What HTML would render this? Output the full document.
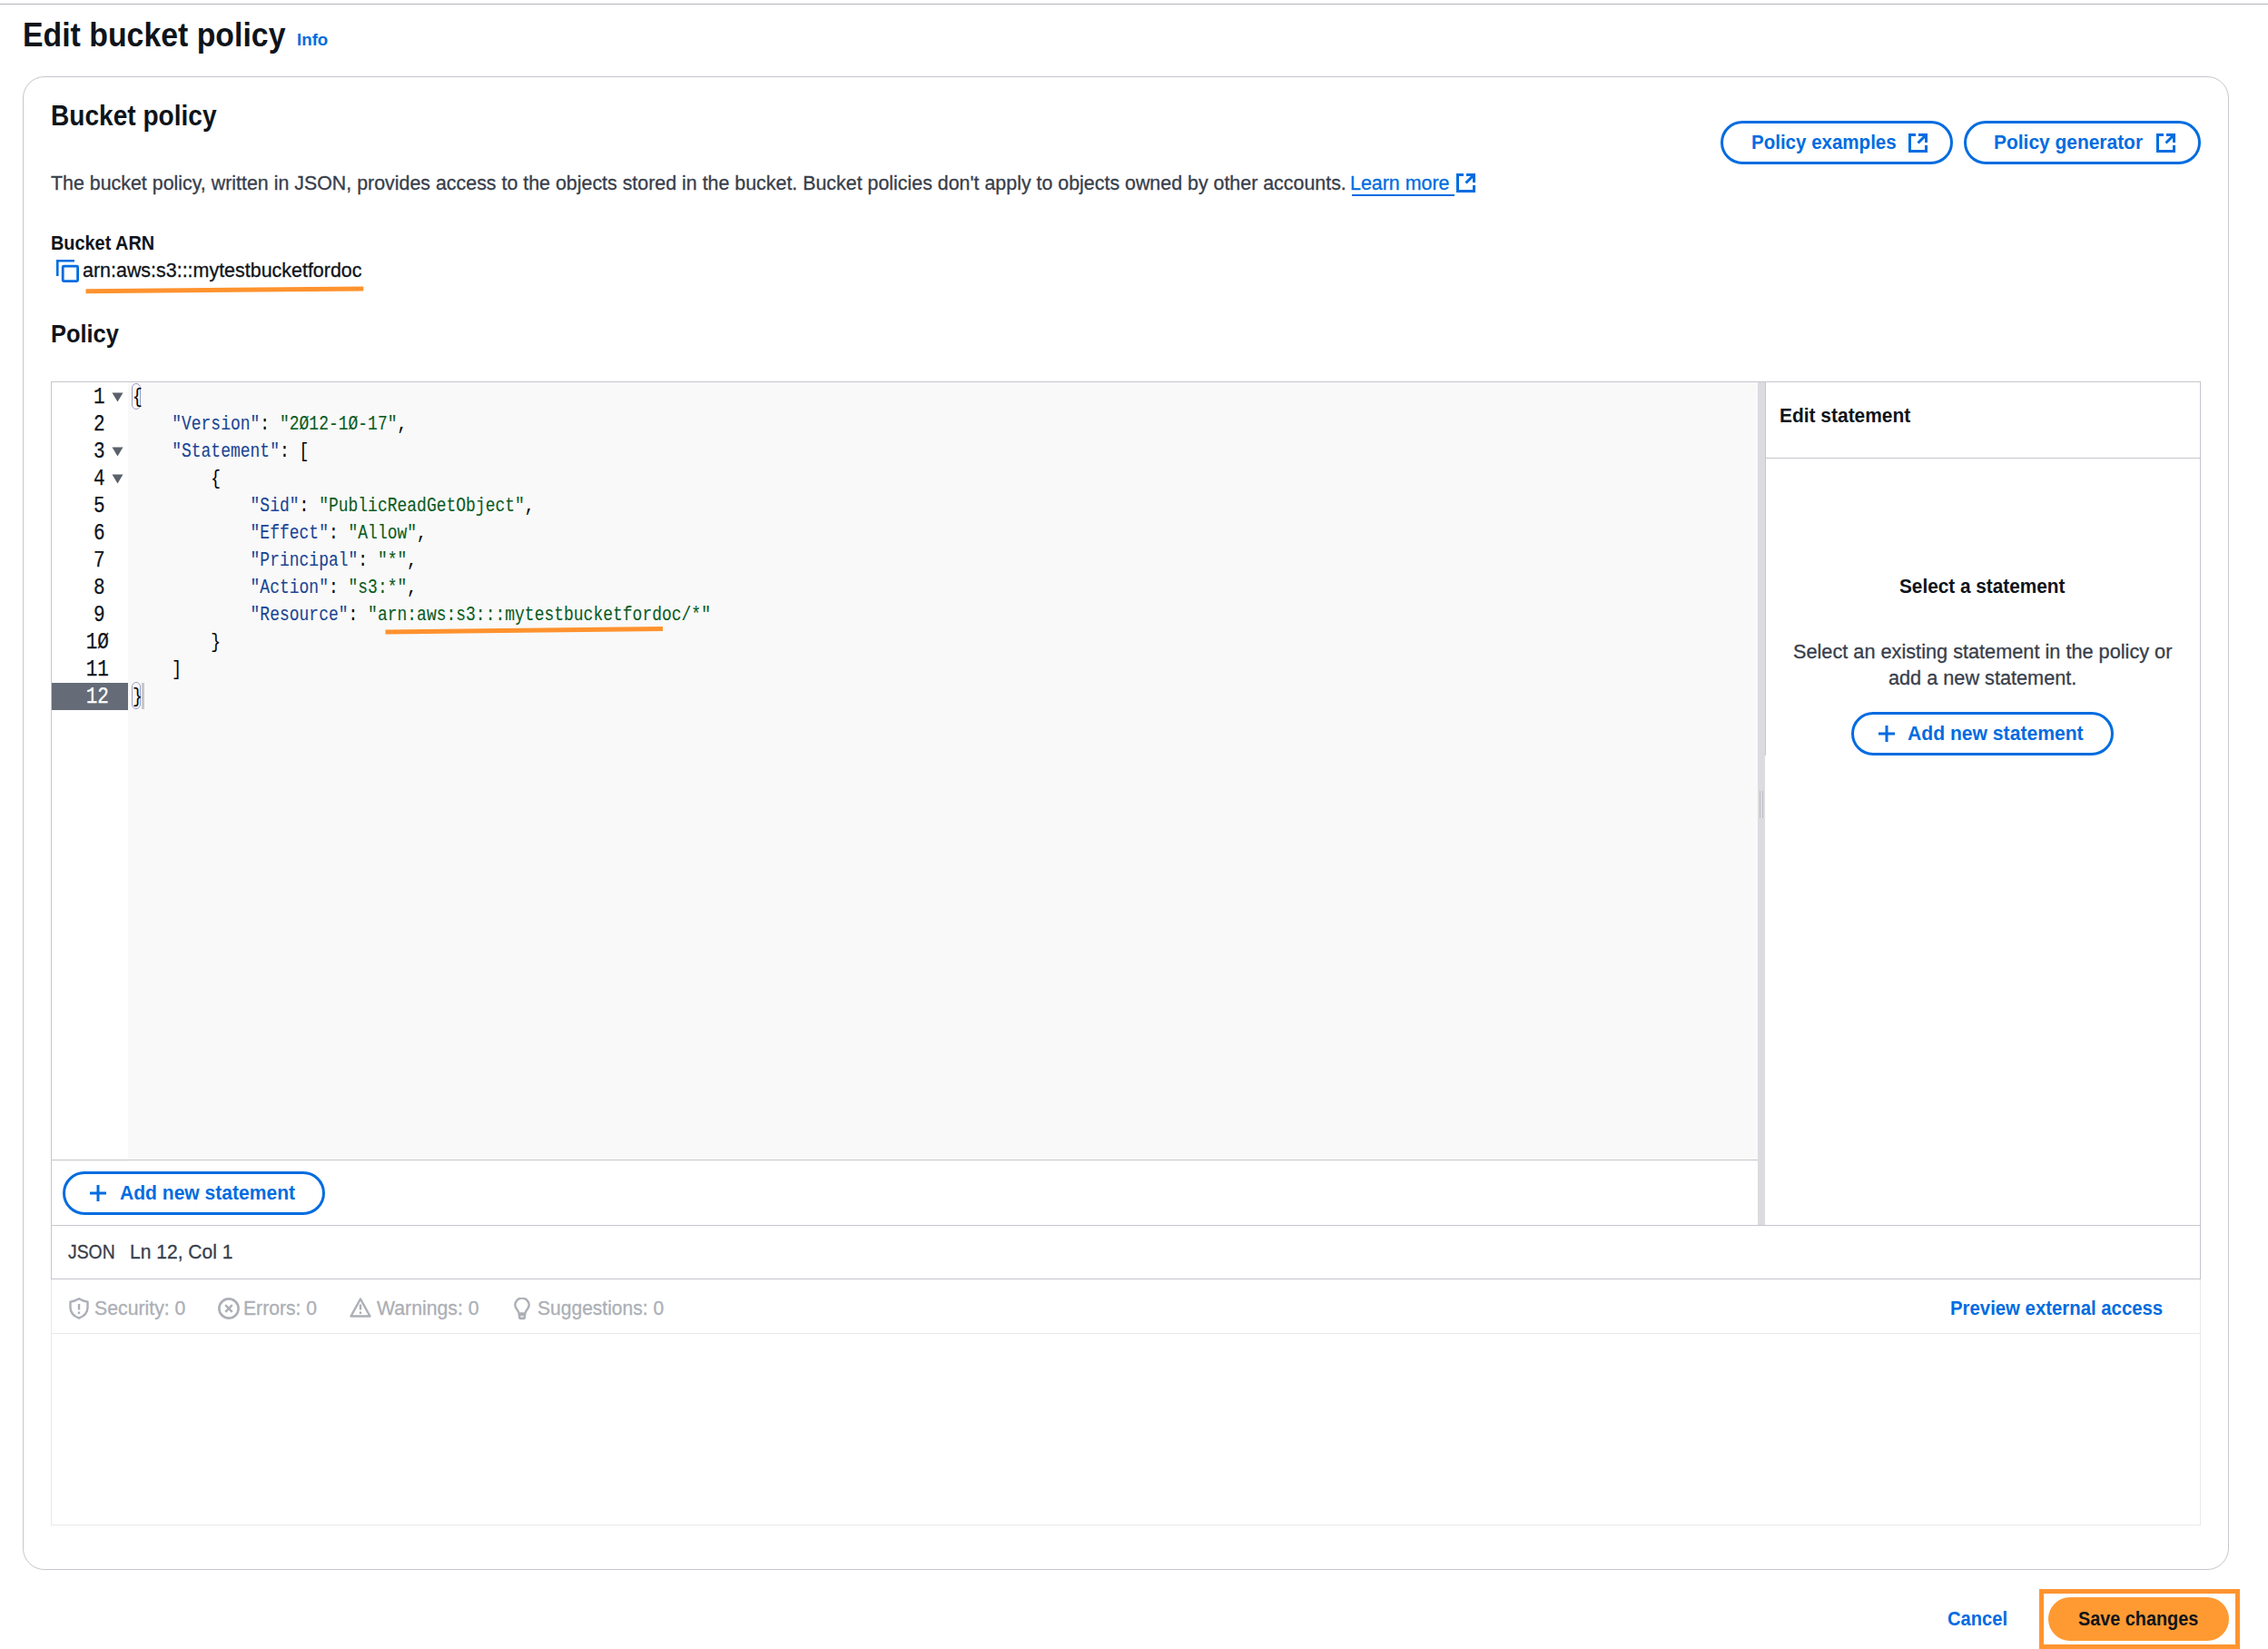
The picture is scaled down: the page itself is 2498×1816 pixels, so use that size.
<!DOCTYPE html>
<html><head><meta charset="utf-8"><title>Edit bucket policy</title>
<style>
html,body{margin:0;padding:0;background:#ffffff;}
body{width:2498px;height:1816px;position:relative;overflow:hidden;font-family:"Liberation Sans",sans-serif;}
.ab{position:absolute;}
.t{position:absolute;white-space:nowrap;line-height:1;transform-origin:0 0;}
.c{position:absolute;left:146px;white-space:pre;font-family:"Liberation Mono",monospace;font-size:21.70px;line-height:1;transform-origin:0 0;transform:scaleX(0.8295);-webkit-text-stroke:0.12px currentColor;}
.g{position:absolute;right:2378px;white-space:pre;font-family:"Liberation Mono",monospace;font-size:25.80px;line-height:1;transform-origin:100% 0;transform:scaleX(0.8141);text-align:right;-webkit-text-stroke:0.25px currentColor;}
</style></head>
<body>
<div class="ab" style="left:0px;top:4px;width:2498px;height:1px;background:#b4b4bb"></div>
<div class="ab" style="left:25px;top:84px;width:2430px;height:1645px;box-sizing:border-box;border:1px solid #c6c6cd;border-radius:24px"></div>
<div class="ab" style="left:1895px;top:133px;width:256px;height:48px;box-sizing:border-box;border:3px solid #006ce0;border-radius:24.0px;background:transparent"></div>
<svg class="ab" style="left:2101.5px;top:146.5px" width="21" height="21" viewBox="0 0 21 21"><path d="M8 1.5 H1.5 V19.5 H19.5 V13" fill="none" stroke="#006ce0" stroke-width="3" stroke-linejoin="miter"/><path d="M11 1.5 H19.5 V10" fill="none" stroke="#006ce0" stroke-width="3"/><path d="M19 2 L10.5 10.5" fill="none" stroke="#006ce0" stroke-width="3"/></svg>
<div class="ab" style="left:2163px;top:133px;width:261px;height:48px;box-sizing:border-box;border:3px solid #006ce0;border-radius:24.0px;background:transparent"></div>
<svg class="ab" style="left:2374.5px;top:146.5px" width="21" height="21" viewBox="0 0 21 21"><path d="M8 1.5 H1.5 V19.5 H19.5 V13" fill="none" stroke="#006ce0" stroke-width="3" stroke-linejoin="miter"/><path d="M11 1.5 H19.5 V10" fill="none" stroke="#006ce0" stroke-width="3"/><path d="M19 2 L10.5 10.5" fill="none" stroke="#006ce0" stroke-width="3"/></svg>
<div class="ab" style="left:1489px;top:214px;width:113px;height:2px;background:#006ce0"></div>
<svg class="ab" style="left:1604px;top:191px" width="21" height="21" viewBox="0 0 21 21"><path d="M8 1.5 H1.5 V19.5 H19.5 V13" fill="none" stroke="#006ce0" stroke-width="3" stroke-linejoin="miter"/><path d="M11 1.5 H19.5 V10" fill="none" stroke="#006ce0" stroke-width="3"/><path d="M19 2 L10.5 10.5" fill="none" stroke="#006ce0" stroke-width="3"/></svg>
<svg class="ab" style="left:61px;top:285px" width="26" height="26" viewBox="0 0 26 26"><path d="M2.3 19 V2.3 H21" fill="none" stroke="#006ce0" stroke-width="2.6"/><rect x="8.2" y="8.2" width="16.4" height="16.4" rx="1" fill="none" stroke="#006ce0" stroke-width="2.8"/></svg>
<div class="ab" style="left:56px;top:420px;width:2368px;height:989px;box-sizing:border-box;border:1px solid #c6c6cd;border-bottom:none"></div>
<div class="ab" style="left:141px;top:421px;width:1795px;height:856px;background:#f9f9f9"></div>
<div class="ab" style="left:57px;top:1277px;width:1879px;height:1px;background:#c6c6cd"></div>
<div class="ab" style="left:1936px;top:421px;width:8px;height:928px;background:#dcdbe0"></div>
<div class="ab" style="left:1944px;top:421px;width:1px;height:411px;background:#c6c6cd"></div>
<div class="ab" style="left:1938px;top:871px;width:1px;height:30px;background:#bdbdc4"></div>
<div class="ab" style="left:1941px;top:871px;width:1px;height:30px;background:#bdbdc4"></div>
<div class="ab" style="left:1944px;top:504px;width:479px;height:1px;background:#c6c6cd"></div>
<div class="ab" style="left:57px;top:1349px;width:2366px;height:1px;background:#c6c6cd"></div>
<div class="ab" style="left:56px;top:1408px;width:2368px;height:1px;background:#c6c6cd"></div>
<div class="ab" style="left:56px;top:1409px;width:2368px;height:271px;box-sizing:border-box;border:1px solid #e9e9ed;border-top:none"></div>
<div class="ab" style="left:57px;top:1468px;width:2366px;height:1px;background:#e9e9ed"></div>
<div class="ab" style="left:57px;top:752px;width:84px;height:30px;background:#656c77"></div>
<div class="ab" style="left:145px;top:422px;width:10px;height:29px;box-sizing:border-box;border:1px solid #9a9cc4;border-radius:5px"></div>
<div class="ab" style="left:145px;top:751px;width:10px;height:30px;box-sizing:border-box;border:1px solid #9a9cc4;border-radius:5px"></div>
<div class="ab" style="left:156px;top:752px;width:3px;height:29px;background:#c8c8c8"></div>
<div class="ab" style="left:2039px;top:784px;width:289px;height:48px;box-sizing:border-box;border:3px solid #006ce0;border-radius:24.0px;background:transparent"></div>
<svg class="ab" style="left:2067.5px;top:798px" width="20" height="20" viewBox="0 0 20 20"><path d="M10 1 V19 M1 10 H19" stroke="#006ce0" stroke-width="3" fill="none"/></svg>
<div class="ab" style="left:69px;top:1290px;width:289px;height:48px;box-sizing:border-box;border:3px solid #006ce0;border-radius:24.0px;background:transparent"></div>
<svg class="ab" style="left:98px;top:1304px" width="20" height="20" viewBox="0 0 20 20"><path d="M10 1 V19 M1 10 H19" stroke="#006ce0" stroke-width="3" fill="none"/></svg>
<svg class="ab" style="left:76px;top:1429px" width="22" height="24" viewBox="0 0 22 24"><path d="M11 1.3 C8 3.2 5 4.2 1.5 4.6 V11 C1.5 17 5.5 20.5 11 22.7 C16.5 20.5 20.5 17 20.5 11 V4.6 C17 4.2 14 3.2 11 1.3 Z" fill="none" stroke="#acafb6" stroke-width="2.4" stroke-linejoin="round"/><path d="M11 7 V13.5 M11 15.5 V18" stroke="#acafb6" stroke-width="2.4"/></svg>
<svg class="ab" style="left:240px;top:1429px" width="24" height="24" viewBox="0 0 24 24"><circle cx="12" cy="12" r="10.6" fill="none" stroke="#acafb6" stroke-width="2.6"/><path d="M8.2 8.2 L15.8 15.8 M15.8 8.2 L8.2 15.8" stroke="#acafb6" stroke-width="2.4"/></svg>
<svg class="ab" style="left:385px;top:1429px" width="24" height="23" viewBox="0 0 24 23"><path d="M12 1.5 L22.5 20.5 H1.5 Z" fill="none" stroke="#acafb6" stroke-width="2.4" stroke-linejoin="round"/><path d="M12 7.5 V13.5 M12 15.5 V18" stroke="#acafb6" stroke-width="2.4"/></svg>
<svg class="ab" style="left:566px;top:1428.5px" width="18" height="25" viewBox="0 0 18 25"><path d="M5.3 16.8 C5.3 13.8 1.3 12.2 1.3 8.3 A7.7 7.7 0 0 1 16.7 8.3 C16.7 12.2 12.7 13.8 12.7 16.8" fill="none" stroke="#acafb6" stroke-width="2.4" stroke-linejoin="round"/><path fill-rule="evenodd" d="M4.2 16.3 H13.8 L12.9 22.6 Q12.7 24.2 11.2 24.2 H6.8 Q5.3 24.2 5.1 22.6 Z M7.3 20.2 H10.7 V21.6 H7.3 Z" fill="#acafb6"/></svg>
<div class="ab" style="left:2246px;top:1750px;width:221px;height:66px;box-sizing:border-box;border:5px solid #ff9430"></div>
<div class="ab" style="left:2256px;top:1759px;width:199px;height:48px;border-radius:24px;background:#ff9a33"></div>
<svg class="ab" style="left:123px;top:432.0px" width="13" height="11" viewBox="0 0 13 11"><path d="M0.5 0.5 L12.5 0.5 L6.5 10.5 Z" fill="#5a616b"/></svg><svg class="ab" style="left:123px;top:492.0px" width="13" height="11" viewBox="0 0 13 11"><path d="M0.5 0.5 L12.5 0.5 L6.5 10.5 Z" fill="#5a616b"/></svg><svg class="ab" style="left:123px;top:522.0px" width="13" height="11" viewBox="0 0 13 11"><path d="M0.5 0.5 L12.5 0.5 L6.5 10.5 Z" fill="#5a616b"/></svg>
<div class="g" style="top:425.24px;right:2382.5px;color:#0f141a">1</div>
<div class="g" style="top:455.24px;right:2382.5px;color:#0f141a">2</div>
<div class="g" style="top:485.24px;right:2382.5px;color:#0f141a">3</div>
<div class="g" style="top:515.24px;right:2382.5px;color:#0f141a">4</div>
<div class="g" style="top:545.24px;right:2382.5px;color:#0f141a">5</div>
<div class="g" style="top:575.24px;right:2382.5px;color:#0f141a">6</div>
<div class="g" style="top:605.24px;right:2382.5px;color:#0f141a">7</div>
<div class="g" style="top:635.24px;right:2382.5px;color:#0f141a">8</div>
<div class="g" style="top:665.24px;right:2382.5px;color:#0f141a">9</div>
<div class="g" style="top:695.24px;right:2378px;color:#0f141a">1Ø</div>
<div class="g" style="top:725.24px;right:2378px;color:#0f141a">11</div>
<div class="g" style="top:755.24px;right:2378px;color:#ffffff">12</div>
<div class="c" style="top:427.38px"><span style="color:#000000">{</span></div>
<div class="c" style="top:457.38px">    <span style="color:#1a4594">&quot;Version&quot;</span><span style="color:#000000">: </span><span style="color:#0a5c23">&quot;2Ø12-1Ø-17&quot;</span><span style="color:#000000">,</span></div>
<div class="c" style="top:487.38px">    <span style="color:#1a4594">&quot;Statement&quot;</span><span style="color:#000000">: [</span></div>
<div class="c" style="top:517.38px">        <span style="color:#000000">{</span></div>
<div class="c" style="top:547.38px">            <span style="color:#1a4594">&quot;Sid&quot;</span><span style="color:#000000">: </span><span style="color:#0a5c23">&quot;PublicReadGetObject&quot;</span><span style="color:#000000">,</span></div>
<div class="c" style="top:577.38px">            <span style="color:#1a4594">&quot;Effect&quot;</span><span style="color:#000000">: </span><span style="color:#0a5c23">&quot;Allow&quot;</span><span style="color:#000000">,</span></div>
<div class="c" style="top:607.38px">            <span style="color:#1a4594">&quot;Principal&quot;</span><span style="color:#000000">: </span><span style="color:#0a5c23">&quot;*&quot;</span><span style="color:#000000">,</span></div>
<div class="c" style="top:637.38px">            <span style="color:#1a4594">&quot;Action&quot;</span><span style="color:#000000">: </span><span style="color:#0a5c23">&quot;s3:*&quot;</span><span style="color:#000000">,</span></div>
<div class="c" style="top:667.38px">            <span style="color:#1a4594">&quot;Resource&quot;</span><span style="color:#000000">: </span><span style="color:#0a5c23">&quot;arn:aws:s3:::mytestbucketfordoc/*&quot;</span></div>
<div class="c" style="top:697.38px">        <span style="color:#000000">}</span></div>
<div class="c" style="top:727.38px">    <span style="color:#000000">]</span></div>
<div class="c" style="top:757.38px"><span style="color:#000000">}</span></div>
<div class="t" style="left:25.17px;top:20.67px;font-size:36.77px;font-weight:700;color:#0f141a;transform:scaleX(0.9200)">Edit bucket policy</div>
<div class="t" style="left:326.88px;top:34.93px;font-size:18.75px;font-weight:700;color:#006ce0;transform:scaleX(0.9983)">Info</div>
<div class="t" style="left:56.22px;top:112.16px;font-size:30.52px;font-weight:700;color:#0f141a;transform:scaleX(0.9200)">Bucket policy</div>
<div class="t" style="left:55.97px;top:190.84px;font-size:21.22px;font-weight:400;color:#383e4b;transform:scaleX(1.0080);-webkit-text-stroke:0.3px currentColor">The bucket policy, written in JSON, provides access to the objects stored in the bucket. Bucket policies don&#x27;t apply to objects owned by other accounts.</div>
<div class="t" style="left:1487.29px;top:190.84px;font-size:21.22px;font-weight:400;color:#006ce0;transform:scaleX(1.0089);-webkit-text-stroke:0.3px currentColor">Learn more</div>
<div class="t" style="left:55.71px;top:256.54px;font-size:21.80px;font-weight:700;color:#0f141a;transform:scaleX(0.9122)">Bucket ARN</div>
<div class="t" style="left:90.84px;top:286.74px;font-size:21.80px;font-weight:400;color:#0f141a;transform:scaleX(0.9839);-webkit-text-stroke:0.3px currentColor">arn:aws:s3:::mytestbucketfordoc</div>
<div class="t" style="left:55.78px;top:353.31px;font-size:28.34px;font-weight:700;color:#0f141a;transform:scaleX(0.8962)">Policy</div>
<div class="t" style="left:1928.67px;top:145.67px;font-size:21.66px;font-weight:700;color:#006ce0;transform:scaleX(0.9474)">Policy examples</div>
<div class="t" style="left:2196.14px;top:145.67px;font-size:21.66px;font-weight:700;color:#006ce0;transform:scaleX(0.9667)">Policy generator</div>
<div class="t" style="left:1959.74px;top:446.73px;font-size:21.58px;font-weight:700;color:#0f141a;transform:scaleX(0.9704)">Edit statement</div>
<div class="t" style="left:2091.88px;top:634.54px;font-size:21.80px;font-weight:700;color:#0f141a;transform:scaleX(0.9526)">Select a statement</div>
<div class="t" style="left:1975.13px;top:707.71px;font-size:21.37px;font-weight:400;color:#383e4b;transform:scaleX(1.0161);-webkit-text-stroke:0.3px currentColor">Select an existing statement in the policy or</div>
<div class="t" style="left:2080.23px;top:736.61px;font-size:21.37px;font-weight:400;color:#383e4b;transform:scaleX(1.0151);-webkit-text-stroke:0.3px currentColor">add a new statement.</div>
<div class="t" style="left:2101.18px;top:796.54px;font-size:21.80px;font-weight:700;color:#006ce0;transform:scaleX(0.9690)">Add new statement</div>
<div class="t" style="left:131.98px;top:1302.54px;font-size:21.80px;font-weight:700;color:#006ce0;transform:scaleX(0.9660)">Add new statement</div>
<div class="t" style="left:74.71px;top:1368.99px;font-size:21.51px;font-weight:400;color:#383e4b;transform:scaleX(0.9010);-webkit-text-stroke:0.3px currentColor">JSON</div>
<div class="t" style="left:143.32px;top:1368.99px;font-size:21.51px;font-weight:400;color:#383e4b;transform:scaleX(0.9789);-webkit-text-stroke:0.3px currentColor">Ln 12, Col 1</div>
<div class="t" style="left:103.65px;top:1429.64px;font-size:21.22px;font-weight:400;color:#acafb6;transform:scaleX(1.0017);-webkit-text-stroke:0.3px currentColor">Security: 0</div>
<div class="t" style="left:268.31px;top:1429.64px;font-size:21.22px;font-weight:400;color:#acafb6;transform:scaleX(0.9963);-webkit-text-stroke:0.3px currentColor">Errors: 0</div>
<div class="t" style="left:415.00px;top:1429.64px;font-size:21.22px;font-weight:400;color:#acafb6;transform:scaleX(1.0012);-webkit-text-stroke:0.3px currentColor">Warnings: 0</div>
<div class="t" style="left:591.86px;top:1429.64px;font-size:21.22px;font-weight:400;color:#acafb6;transform:scaleX(0.9915);-webkit-text-stroke:0.3px currentColor">Suggestions: 0</div>
<div class="t" style="left:2147.78px;top:1430.71px;font-size:21.37px;font-weight:700;color:#006ce0;transform:scaleX(0.9527)">Preview external access</div>
<div class="t" style="left:2145.19px;top:1772.04px;font-size:21.80px;font-weight:700;color:#006ce0;transform:scaleX(0.9241)">Cancel</div>
<div class="t" style="left:2289.30px;top:1773.21px;font-size:21.37px;font-weight:700;color:#0f141a;transform:scaleX(0.9277)">Save changes</div>
<svg class="ab" style="left:0;top:0" width="2498" height="1816"><path d="M94.5 320.8 L400.3 318" stroke="#ff922e" stroke-width="5" fill="none"/><path d="M424.5 696.1 L730 692.5" stroke="#ff922e" stroke-width="5" fill="none"/></svg>
</body></html>
